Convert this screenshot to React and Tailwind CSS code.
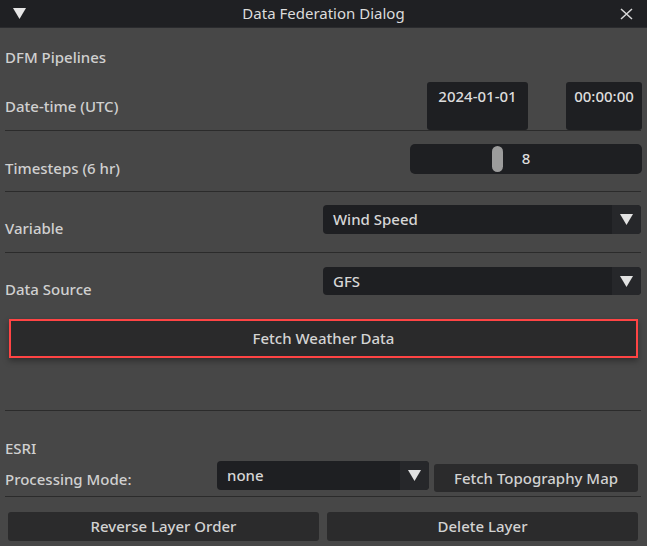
import React from "react";

const Tri = ({ className = "" }) => (
  <svg viewBox="0 0 13 11" className={className} fill="currentColor">
    <path d="M0 0 H13 L6.5 11 Z" />
  </svg>
);

const Sep = () => <div className="h-px bg-[#2b2b2b] mx-[5px] mr-[6px]" />;

const Select = ({ value, className = "" }) => (
  <div className={"flex rounded-[4px] overflow-hidden bg-[#1e1f22] " + className}>
    <div className="flex-1 flex items-center pl-[10px] text-[#d6d6d6]">{value}</div>
    <div className="w-[29px] bg-[#26272a] flex items-center justify-center text-[#e2e2e2]">
      <Tri className="w-[13px] h-[11px]" />
    </div>
  </div>
);

const Btn = ({ children, className = "" }) => (
  <div className={"flex items-center justify-center bg-[#2b2b2c] rounded-[3px] text-[#d2d2d2] " + className}>
    {children}
  </div>
);

export default function App() {
  return (
    <div
      className="w-[647px] h-[546px] bg-[#474747] overflow-hidden text-[15px] font-medium leading-[19px] text-[#d0d0d0] flex flex-col"
      style={{ fontFamily: '"Noto Sans", "Open Sans", sans-serif' }}
    >
      {/* title bar */}
      <div className="h-[28px] bg-[#1f2023] border-b border-[#2a2b2e] flex items-center relative shrink-0">
        <Tri className="w-[13px] h-[11px] ml-[13px] text-[#e6e6e6]" />
        <div className="absolute inset-0 flex items-center justify-center text-[#dcdcdc] text-[15px] font-normal">
          Data Federation Dialog
        </div>
        <svg viewBox="0 0 13 12" className="w-[13px] h-[12px] absolute left-[620px] top-[8px]" stroke="#d8d8d8" strokeWidth="1.5" fill="none">
          <path d="M1 1 L12 11 M12 1 L1 11" />
        </svg>
      </div>

      {/* DFM Pipelines */}
      <div className="h-[54px] pl-[5px] pt-[20px] shrink-0">DFM Pipelines</div>

      {/* Date-time row */}
      <div className="h-[48px] flex items-center pl-[5px] shrink-0">
        <div className="flex-1">Date-time (UTC)</div>
        <div className="w-[101px] h-full bg-[#1e1f22] rounded-[3px] flex justify-center pt-[5px] text-[#dcdcdc]">2024-01-01</div>
        <div className="w-[38px]" />
        <div className="w-[76px] h-full bg-[#1e1f22] rounded-[3px] flex justify-center pt-[5px] text-[#dcdcdc] mr-[5px]">00:00:00</div>
      </div>
      <Sep />

      {/* Timesteps */}
      <div className="h-[60px] flex items-start pl-[5px] shrink-0">
        <div className="flex-1 mt-[28px]">Timesteps (6 hr)</div>
        <div className="w-[232px] h-[30px] mt-[13px] mr-[5px] bg-[#1e1f22] rounded-[5px] relative flex items-center justify-center text-[#dcdcdc]">
          <div className="absolute left-[82px] top-[2px] w-[11px] h-[26px] rounded-full bg-[#9c9c9c]" />
          <span className="-mt-[2px]">8</span>
        </div>
      </div>
      <Sep />

      {/* Variable */}
      <div className="h-[60px] flex items-start pl-[5px] shrink-0">
        <div className="w-[318px] mt-[27px]">Variable</div>
        <Select value="Wind Speed" className="w-[318px] h-[29px] mt-[13px]" />
      </div>
      <Sep />

      {/* Data Source */}
      <div className="h-[56px] flex items-start pl-[5px] shrink-0">
        <div className="w-[318px] mt-[27px]">Data Source</div>
        <Select value="GFS" className="w-[318px] h-[28px] mt-[14px]" />
      </div>

      {/* Fetch weather */}
      <div className="mt-[10px] ml-[9px] w-[629px] h-[39px] border-2 border-[#ff4444] bg-[#2a2a2b] shadow-[0_3px_6px_rgba(0,0,0,0.35)] flex items-center justify-center text-[#d4d4d4] shrink-0">
        Fetch Weather Data
      </div>

      <div className="h-[52px] shrink-0" />
      <Sep />

      {/* ESRI */}
      <div className="h-[50px] pl-[5px] pt-[28px] shrink-0">ESRI</div>
      <div className="h-[35px] flex items-start pl-[5px] shrink-0">
        <div className="w-[212px] mt-[9px]">Processing Mode:</div>
        <Select value="none" className="w-[212px] h-[29px]" />
        <Btn className="w-[204px] h-[28px] ml-[5px] mt-[3px]">Fetch Topography Map</Btn>
      </div>
      <Sep />

      {/* bottom buttons */}
      <div className="flex pl-[8px] mt-[15px] gap-[8px] shrink-0">
        <Btn className="w-[311px] h-[29px]">Reverse Layer Order</Btn>
        <Btn className="w-[311px] h-[29px]">Delete Layer</Btn>
      </div>
    </div>
  );
}
